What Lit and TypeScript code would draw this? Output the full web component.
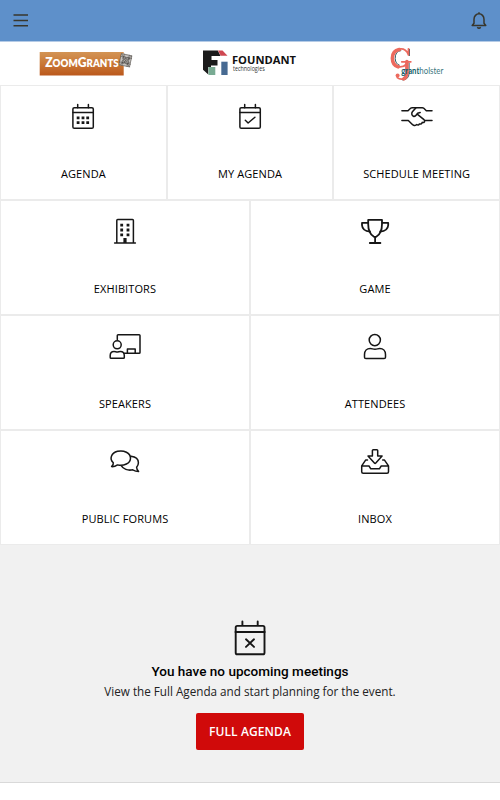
import { LitElement, html, svg, css } from "lit";
import { customElement } from "lit/decorators.js";

const calendar = svg`<rect x="9.9" y="10.7" width="20.4" height="20.6" rx="1.4"/><path d="M10 15.4H30.2M14.7 7.6V10.7M25.4 7.6V10.7"/>`;

const icons = {
  agenda: svg`${calendar}<path class="solid" d="M13.7 19.6h2.8v2.6h-2.8zM18.6 19.6h2.8v2.6h-2.8zM23.3 19.6h2.8v2.6h-2.8zM13.7 24.3h2.8v2.6h-2.8zM18.6 24.3h2.8v2.6h-2.8zM23.3 24.3h2.8v2.6h-2.8z"/>`,
  check: svg`${calendar}<path d="M15.3 23.3L18.1 26L24.9 20.2"/>`,
  handshake: svg`<path d="M4.9 13.8H11L13.6 11.3Q14.2 10.7 15.2 10.7H25.2Q26.2 10.7 26.8 11.3L29.3 13.8H35"/><path d="M18.8 10.9L15.4 14.8C14.2 16.3 14.8 18.6 16.4 19.2C17.4 19.6 18.5 19.1 19.3 18L20.6 16.3L23.2 15.5M20.8 17.6L27 22.7Q28 23.6 27.5 24.7Q26.6 26 25.2 25.4Q24.8 27.6 22.4 26.9Q21.6 28.6 19.8 27.6Q18.5 29 16.6 28.2Q15.5 27.8 14.6 26.8L11.3 23.5H4.9M28 23.5H35"/>`,
  building: svg`<path d="M11.8 31V8.4Q11.8 7.5 12.7 7.5H27.5Q28.4 7.5 28.4 8.4V31M9.6 31.1H30.4"/><path class="solid" d="M15.3 11.8h2.8v2.8h-2.8zM21.6 11.8h2.8v2.8h-2.8zM15.3 16.6h2.8v2.8h-2.8zM21.6 16.6h2.8v2.8h-2.8zM15.3 21.4h2.8v2.8h-2.8zM21.6 21.4h2.8v2.8h-2.8zM18.4 26.1h3.2v5h-3.2z"/>`,
  trophy: svg`<g stroke-width="1.8"><path d="M13.2 7.9H27V12C27 18.2 24.8 22.6 21.5 24.6Q20.1 25.3 18.7 24.6C15.4 22.6 13.2 18.2 13.2 12Z"/><path d="M12.8 10.9H7V13.2C7.3 17 10.5 19.2 15 19.5M27.4 10.9H33.2V13.2C32.9 17 29.7 19.2 25.2 19.5M20.1 25V31M14.8 31H25.4"/></g>`,
  speaker: svg`<path d="M12.3 12.6V8.5Q12.3 7.7 13.1 7.7H34.1Q35 7.7 35 8.5V25.5Q35 26.3 34.1 26.3H19.4M22.4 26V21.9H30.2V26"/><circle cx="12.2" cy="17.8" r="4"/><path d="M5.2 30.4V28.6C5.2 26 6.8 24.5 9 24.5C10.6 24.5 10.8 25 12.2 25S13.8 24.5 15.4 24.5C17.6 24.5 19.3 26 19.3 28.6V30.4Q19.3 31.3 18.4 31.3H6.1Q5.2 31.3 5.2 30.4Z"/>`,
  person: svg`<circle cx="19.8" cy="13.1" r="5.6"/><path d="M9.5 30.2V27.6C9.5 23.8 12 21.5 15.2 21.5C17.3 21.5 17.7 22.3 20 22.3S22.7 21.5 24.8 21.5C28 21.5 30.5 23.8 30.5 27.6V30.2Q30.5 31.6 29.1 31.6H10.9Q9.5 31.6 9.5 30.2Z"/>`,
  forums: svg`<path d="M8.3 20.7A9.7 7.2 0 1 1 12.5 22.9Q9.5 24.9 6.6 24.6Q8.7 22.5 8.3 20.7ZM26 14.3C30.6 14.8 33.4 17.4 33.4 20.8Q33.4 23.2 31.6 25.3Q31.6 27.3 33.6 29.5Q30.7 29.5 27.7 27.8C22.8 28.9 18.1 27 16.2 23.7"/>`,
  inbox: svg`<path d="M17.4 8.6Q17.4 7.8 18.2 7.8H21.9Q22.7 7.8 22.7 8.6V14.1H27.1L20.8 21.1Q20.1 21.9 19.4 21.1L13 14.1H17.4ZM12.5 18.1H10.6L6.7 23.9V29.8Q6.7 31.3 8.2 31.3H32Q33.5 31.3 33.5 29.8V23.9L29.5 18.1H27.7M7 24H14L15.8 26.8H24.4L26.2 24H33.2"/>`,
};

@customElement("app-root")
export class AppRoot extends LitElement {
  static styles = css`
    :host {
      display: flex;
      flex-direction: column;
      height: 800px;
      background: #fff;
      color: #000;
      font-family: "Open Sans", "Noto Sans", sans-serif;
    }
    svg {
      display: block;
      fill: none;
      stroke: #161616;
      stroke-width: 1.5;
      stroke-linejoin: round;
      stroke-linecap: round;
      overflow: visible;
    }
    .solid { fill: #161616; stroke: none; }
    svg text { stroke: none; }
    .top {
      box-sizing: border-box;
      height: 42px;
      flex: none;
      background: #5e90ca;
      border-bottom: 1px solid #b5cbe6;
      display: flex;
      justify-content: space-between;
      padding: 10px 11px 0 11px;
    }
    .top svg { stroke: #38362c; stroke-width: 1.5; stroke-linecap: butt; }
    .sponsors {
      height: 43px;
      flex: none;
      display: grid;
      grid-template-columns: repeat(3, 1fr);
      justify-items: center;
    }
    .sponsors svg { stroke: none; }
    .row {
      height: 115px;
      flex: none;
      display: flex;
      background: #fff;
    }
    .tile {
      box-sizing: border-box;
      flex: 1 1 0;
      min-width: 0;
      border: 1px solid #ebebeb;
      display: flex;
      flex-direction: column;
      align-items: center;
      padding-top: 11px;
    }
    .label {
      margin-top: 28px;
      font-size: 11px;
      line-height: 17px;
      letter-spacing: 0.1px;
      white-space: nowrap;
    }
    .empty {
      box-sizing: border-box;
      height: 238px;
      flex: none;
      background: #f1f1f1;
      border-bottom: 1px solid #d9d9d9;
      display: flex;
      flex-direction: column;
      align-items: center;
      padding-top: 72px;
    }
    .title {
      margin-top: 4px;
      font: 500 13.5px/20px Roboto, sans-serif;
      letter-spacing: 0.02px;
      white-space: nowrap;
    }
    .sub {
      font-size: 11.7px;
      line-height: 20px;
      color: #222;
      white-space: nowrap;
    }
    .button {
      margin-top: 12px;
      width: 108px;
      height: 37px;
      border: 0;
      padding: 0;
      border-radius: 2px;
      background: #d00a0a;
      color: #fff;
      font: 600 12px/37px "Open Sans", sans-serif;
      letter-spacing: 0.1px;
    }
  `;

  private tile(icon: keyof typeof icons, label: string) {
    return html`<div class="tile">
      <svg width="40" height="40" viewBox="0 0 40 40">${icons[icon]}</svg>
      <div class="label">${label}</div>
    </div>`;
  }

  render() {
    return html`
      <header class="top">
        <svg width="20" height="22" viewBox="11 10 20 22"><path d="M13.5 15H28M13.5 20.4H28M13.5 25.8H28"/></svg>
        <svg width="20" height="22" viewBox="469 10 20 22">
          <path d="M474 23.2V19.2A5 5.4 0 0 1 484 19.2V23.2L485.8 25.5H472.2ZM479 12.2V14M477.3 27.2Q479 29.3 480.7 27.2"/>
        </svg>
      </header>
      <section class="sponsors">
        <svg width="98" height="43" viewBox="34.3 42 98 43">
          <defs><linearGradient id="orange" x2="0" y2="1"><stop stop-color="#d39455"/><stop offset=".5" stop-color="#c97836"/><stop offset="1" stop-color="#bb581c"/></linearGradient></defs>
          <rect x="40" y="52" width="84" height="23.5" fill="url(#orange)"/>
          <text x="45.5" y="67.3" fill="#fff" font-family="Lato" font-weight="800" font-size="13" textLength="73.5" lengthAdjust="spacingAndGlyphs">Z<tspan font-size="10.4">OOM</tspan>G<tspan font-size="10.4">RANTS</tspan></text>
          <g transform="rotate(12 126 60)">
            <rect x="120.5" y="54.3" width="11" height="12" fill="#c4c1bd"/>
            <g stroke="#4d4845" stroke-width=".5" fill="none">
              <rect x="120.8" y="54.6" width="10.4" height="11.4"/>
              <path d="M120.5 57.4H131.5M120.5 63.2H131.5M123.4 54.6V66M128.6 54.6V66M121 55L131 66M131 55L121 66"/>
              <circle cx="124.2" cy="58.3" r="1.6"/><circle cx="128" cy="62.2" r="1.7"/><circle cx="124" cy="62.4" r="1.4"/><circle cx="128" cy="58.2" r="1.4"/>
            </g>
          </g>
        </svg>
        <svg width="98" height="43" viewBox="201 42 98 43">
          <path fill="#1b1b1b" d="M203 50.5H217.8L220.5 56H211.5V60H217.5V65.5H211V67H208.3V74.5L203 69.8Z"/>
          <path fill="#cf4751" d="M218 50.5H222.5L227.5 55.8H220.7Z"/>
          <path fill="#79ab93" d="M208.5 67H215.3V75H208.5Z"/>
          <path fill="#476a92" d="M221.3 61.7H227.6V75H221.3Z"/>
          <text x="232" y="64.2" fill="#111" font-family="Open Sans" font-weight="700" font-size="11.2" textLength="64" lengthAdjust="spacingAndGlyphs">FOUNDANT</text>
          <text x="233" y="71.1" fill="#333" font-family="Open Sans" font-size="6.2" textLength="31.7" lengthAdjust="spacingAndGlyphs">technologies</text>
        </svg>
        <svg width="98" height="43" viewBox="367.7 42 98 43">
          <g fill="none">
            <path stroke="#315f68" stroke-width="1" d="M409.2 49.3V55.5M400.5 50.6Q394.9 51 394.9 58.5Q395.2 64 399 65.2M408.8 63V73.5Q408.4 79.6 402.5 80"/>
            <path stroke="#ec6a5e" stroke-width="3.6" d="M399 49.6Q392.1 51 392.1 58.2Q392.2 65.2 397.8 66.8M406.6 61.5V72.5Q406.4 77.5 403.4 78.8"/>
            <path stroke="#ec6a5e" stroke-width="1.8" d="M397.5 49.7Q401.5 48 405 50.2Q407.3 51.8 408.2 55V48.8M396.8 66.6Q402.5 67.9 405.8 64.5M401.5 61.8H410.5M405 78Q400.5 80.5 397 77.6"/>
            <circle cx="397.3" cy="75.6" r="2" fill="#ec6a5e"/>
          </g>
          <text x="401" y="74" fill="#12606a" font-family="Lato" font-weight="700" font-size="8.6" textLength="18" lengthAdjust="spacingAndGlyphs">grant</text>
          <text x="419" y="74" fill="#3b7780" font-family="Lato" font-size="8.6" textLength="24" lengthAdjust="spacingAndGlyphs">holster</text>
        </svg>
      </section>
      <nav>
        <div class="row">${this.tile("agenda", "AGENDA")}${this.tile("check", "MY AGENDA")}${this.tile("handshake", "SCHEDULE MEETING")}</div>
        <div class="row">${this.tile("building", "EXHIBITORS")}${this.tile("trophy", "GAME")}</div>
        <div class="row">${this.tile("speaker", "SPEAKERS")}${this.tile("person", "ATTENDEES")}</div>
        <div class="row">${this.tile("forums", "PUBLIC FORUMS")}${this.tile("inbox", "INBOX")}</div>
      </nav>
      <section class="empty">
        <svg width="40" height="40" viewBox="230 617 40 40">
          <g stroke-width="1.9"><rect x="235.7" y="625.9" width="28.8" height="28.4" rx="1.6"/><path d="M235.5 632H264.7M242.4 621.4V625M257.7 621.4V625M246 639.3L254 646.9M254 639.3L246 646.9"/></g>
        </svg>
        <div class="title">You have no upcoming meetings</div>
        <div class="sub">View the Full Agenda and start planning for the event.</div>
        <button class="button">FULL AGENDA</button>
      </section>
    `;
  }
}
